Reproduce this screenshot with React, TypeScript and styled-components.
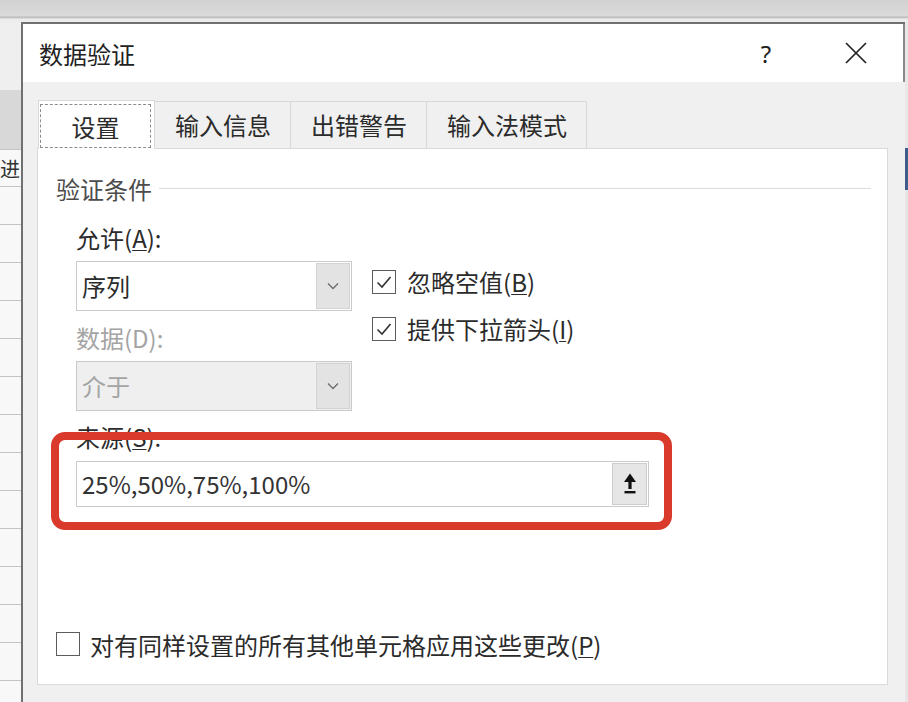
import styled, { createGlobalStyle } from "styled-components";

const GlobalStyle = createGlobalStyle`
    html, body {
        margin: 0;
        padding: 0;
    }
    body {
        width: 908px;
        height: 702px;
        overflow: hidden;
        background: #e4e4e4;
        font-family: "Noto Sans CJK SC", "Noto Sans", sans-serif;
        color: #2b2b2b;
    }
`;

const Screen = styled.div`
    width: 908px;
    height: 702px;
    display: flex;
    flex-direction: column;
    overflow: hidden;
`;

const TopStrip = styled.div`
    height: 22px;
    flex-shrink: 0;
    background: linear-gradient(to bottom, #d2d2d2 0, #dadada 16px, #b9b9b9 17px, #c9c9c9 18px, #ececec 19px);
`;

const Workspace = styled.div`
    flex: 1;
    display: flex;
    min-height: 0;
`;

const SheetColumn = styled.div`
    width: 21px;
    flex-shrink: 0;
    display: flex;
    flex-direction: column;
    overflow: hidden;
    background: #f7f7f7;
`;

interface CellProps {
    $h: number;
    $tone?: string;
    $line?: boolean;
}

const SheetCell = styled.div<CellProps>`
    height: ${p => p.$h}px;
    flex-shrink: 0;
    box-sizing: border-box;
    border-bottom: ${p => (p.$line === false ? "none" : "1px solid #c4c4c4")};
    background: ${p => p.$tone || "#f8f8f8"};
    font-size: 20px;
    line-height: ${p => p.$h}px;
    white-space: nowrap;
    color: #333;
`;

const EdgeColumn = styled.div`
    width: 4px;
    flex-shrink: 0;
    display: flex;
    flex-direction: column;
    background: #e6e6e6;
`;

const Dialog = styled.div`
    width: 882px;
    flex-shrink: 0;
    display: flex;
    flex-direction: column;
    border-left: 2px solid #707070;
    border-top: 2px solid #707070;
    background: #f0f0f0;
`;

const TitleBar = styled.div`
    height: 58px;
    flex-shrink: 0;
    display: flex;
    align-items: center;
    padding: 0 17px 0 16px;
    background: #ffffff;
    border-right: 2px solid #8a8a8a;
`;

const Title = styled.div`
    flex: 1;
    font-size: 24px;
    color: #222;
`;

interface TitleButtonProps {
    $w: number;
}

const TitleButton = styled.div<TitleButtonProps>`
    width: ${p => p.$w}px;
    height: 40px;
    display: flex;
    align-items: center;
    justify-content: center;
    font-family: "Noto Sans", "Liberation Sans", sans-serif;
    font-size: 24px;
    color: #222;
`;

const Body = styled.div`
    flex: 1;
    display: flex;
    flex-direction: column;
    padding: 18px 17px 17px 14px;
    min-height: 0;
`;

const TabRow = styled.div`
    display: flex;
    align-items: flex-end;
    padding-left: 2px;
    margin-bottom: -1px;
    position: relative;
    z-index: 1;
`;

interface TabProps {
    $active?: boolean;
}

const Tab = styled.div<TabProps>`
    box-sizing: border-box;
    height: ${p => (p.$active ? 49 : 48)}px;
    display: flex;
    align-items: stretch;
    margin-left: -1px;
    padding: ${p => (p.$active ? "3px 3px 1px 1px" : "0 19px 0 20px")};
    border: 1px solid #d9d9d9;
    border-bottom: ${p => (p.$active ? "none" : "1px solid #d9d9d9")};
    background: ${p => (p.$active ? "#ffffff" : "#f0f0f0")};
    font-size: 24px;
    line-height: 46px;
    color: #2b2b2b;
`;

const FocusBox = styled.div`
    width: 109px;
    display: flex;
    align-items: center;
    justify-content: center;
    border: 1px dashed #8c8c8c;
    line-height: 1;
    padding-top: 2px;
`;

const Panel = styled.div`
    flex: 1;
    display: flex;
    flex-direction: column;
    background: #ffffff;
    border: 1px solid #dadada;
    padding: 24px 16px 25px 18px;
`;

const GroupHeader = styled.div`
    display: flex;
    align-items: center;
    height: 30px;
    font-size: 24px;
    color: #4c4c4c;
`;

const GroupRule = styled.div`
    flex: 1;
    height: 1px;
    margin-left: 7px;
    background: #dcdcdc;
`;

const FormArea = styled.div`
    padding-left: 20px;
    margin-top: 20px;
`;

const TopFields = styled.div`
    display: flex;
`;

const LeftCol = styled.div`
    width: 276px;
    display: flex;
    flex-direction: column;
`;

interface DisabledProps {
    $disabled?: boolean;
}

const FieldLabel = styled.div<DisabledProps>`
    height: 30px;
    line-height: 30px;
    font-size: 24px;
    color: ${p => (p.$disabled ? "#a4a4a4" : "#2b2b2b")};
`;

const Select = styled.div<DisabledProps>`
    height: 50px;
    box-sizing: border-box;
    margin: 8px 0 12px;
    display: flex;
    border: 1px solid #cacaca;
    background: ${p => (p.$disabled ? "#efefef" : "#ffffff")};
`;

const SelectValue = styled.div<DisabledProps>`
    flex: 1;
    padding-left: 5px;
    font-size: 24px;
    line-height: 48px;
    color: ${p => (p.$disabled ? "#a4a4a4" : "#2b2b2b")};
`;

const SelectButton = styled.div`
    width: 32px;
    margin: 1px 1px 1px 0;
    display: flex;
    align-items: center;
    justify-content: center;
    background: #e3e3e3;
    border: 1px solid #d2d2d2;
`;

const CheckCol = styled.div`
    margin: 35px 0 0 20px;
    display: flex;
    flex-direction: column;
`;

const CheckRow = styled.div`
    height: 47px;
    display: flex;
    align-items: center;
    gap: 11px;
    font-size: 24px;
    color: #2b2b2b;
`;

const Box = styled.div`
    width: 24px;
    height: 24px;
    flex-shrink: 0;
    box-sizing: border-box;
    border: 1.5px solid #5c5c5c;
    background: #ffffff;
    display: flex;
    align-items: center;
    justify-content: center;
`;

const AccessKey = styled.span`
    text-decoration: underline;
    text-underline-offset: 2px;
    text-decoration-thickness: 1px;
`;

const SourceBlock = styled.div`
    position: relative;
    width: 573px;
    margin-top: -1px;
`;

const SourceInput = styled.div`
    height: 46px;
    box-sizing: border-box;
    margin-top: 9px;
    display: flex;
    border: 1px solid #cacaca;
    background: #ffffff;
`;

const InputText = styled.div`
    flex: 1;
    padding-left: 5px;
    font-size: 24px;
    line-height: 44px;
    color: #333;
`;

const PickButton = styled.div`
    width: 33px;
    margin: 1px;
    display: flex;
    align-items: center;
    justify-content: center;
    background: #e6e6e6;
    border: 1px solid #cdcdcd;
`;

const Annotation = styled.div`
    position: absolute;
    left: -25px;
    top: 10px;
    width: 621px;
    height: 98px;
    box-sizing: border-box;
    border: 8px solid #da3a2c;
    border-radius: 14px;
    pointer-events: none;
`;

const FooterRow = styled.div`
    margin-top: auto;
    height: 30px;
    display: flex;
    align-items: center;
    gap: 10px;
    font-size: 24px;
    color: #2b2b2b;
`;

const Chevron = () => (
    <svg width="12" height="8" viewBox="0 0 12 8">
        <path d="M1 1.5 L6 6.5 L11 1.5" fill="none" stroke="#6b6b6b" strokeWidth="1.3" />
    </svg>
);

const CheckMark = () => (
    <svg width="20" height="20" viewBox="0 0 20 20">
        <path d="M3.5 10.5 L8 15 L16.5 5" fill="none" stroke="#333" strokeWidth="1.6" />
    </svg>
);

const CloseIcon = () => (
    <svg width="24" height="24" viewBox="0 0 24 24">
        <path d="M2 2 L22 22 M22 2 L2 22" stroke="#222" strokeWidth="1.7" />
    </svg>
);

const CollapseIcon = () => (
    <svg width="16" height="26" viewBox="0 0 16 26">
        <path d="M8 2.5 L14 11 L2 11 Z" fill="#111" />
        <rect x="6.4" y="10" width="3.2" height="8" fill="#111" />
        <rect x="2.5" y="20" width="11" height="2.4" fill="#111" />
    </svg>
);

function Checkbox({ checked }: { checked: boolean }) {
    return <Box>{checked ? <CheckMark /> : null}</Box>;
}

const sheetRows = Array.from({ length: 14 }, (_, i) => i);

export default function App() {
    return (
        <Screen>
            <GlobalStyle />
            <TopStrip />
            <Workspace>
                <SheetColumn>
                    <SheetCell $h={68} $tone="#efefef" $line={false} />
                    <SheetCell $h={60} $tone="#d8d8d8" />
                    <SheetCell $h={37}>进</SheetCell>
                    {sheetRows.map(i => (
                        <SheetCell key={i} $h={38} />
                    ))}
                </SheetColumn>

                <Dialog>
                    <TitleBar>
                        <Title>数据验证</Title>
                        <TitleButton $w={40}>?</TitleButton>
                        <TitleButton $w={40} />
                        <TitleButton $w={60}>
                            <CloseIcon />
                        </TitleButton>
                    </TitleBar>

                    <Body>
                        <TabRow>
                            <Tab $active>
                                <FocusBox>设置</FocusBox>
                            </Tab>
                            <Tab>输入信息</Tab>
                            <Tab>出错警告</Tab>
                            <Tab>输入法模式</Tab>
                        </TabRow>

                        <Panel>
                            <GroupHeader>
                                验证条件
                                <GroupRule />
                            </GroupHeader>

                            <FormArea>
                                <TopFields>
                                    <LeftCol>
                                        <FieldLabel>
                                            允许(<AccessKey>A</AccessKey>):
                                        </FieldLabel>
                                        <Select>
                                            <SelectValue>序列</SelectValue>
                                            <SelectButton>
                                                <Chevron />
                                            </SelectButton>
                                        </Select>
                                        <FieldLabel $disabled>数据(D):</FieldLabel>
                                        <Select $disabled>
                                            <SelectValue $disabled>介于</SelectValue>
                                            <SelectButton>
                                                <Chevron />
                                            </SelectButton>
                                        </Select>
                                    </LeftCol>
                                    <CheckCol>
                                        <CheckRow>
                                            <Checkbox checked />
                                            <span>
                                                忽略空值(<AccessKey>B</AccessKey>)
                                            </span>
                                        </CheckRow>
                                        <CheckRow>
                                            <Checkbox checked />
                                            <span>
                                                提供下拉箭头(<AccessKey>I</AccessKey>)
                                            </span>
                                        </CheckRow>
                                    </CheckCol>
                                </TopFields>

                                <SourceBlock>
                                    <FieldLabel>
                                        来源(<AccessKey>S</AccessKey>):
                                    </FieldLabel>
                                    <SourceInput>
                                        <InputText>25%,50%,75%,100%</InputText>
                                        <PickButton>
                                            <CollapseIcon />
                                        </PickButton>
                                    </SourceInput>
                                    <Annotation />
                                </SourceBlock>
                            </FormArea>

                            <FooterRow>
                                <Checkbox checked={false} />
                                <span>
                                    对有同样设置的所有其他单元格应用这些更改(<AccessKey>P</AccessKey>)
                                </span>
                            </FooterRow>
                        </Panel>
                    </Body>
                </Dialog>

                <EdgeColumn>
                    <SheetCell $h={126} $tone="#e8e8e8" $line={false} />
                    <SheetCell $h={42} $tone="#3d5d8c" $line={false} />
                </EdgeColumn>
            </Workspace>
        </Screen>
    );
}
